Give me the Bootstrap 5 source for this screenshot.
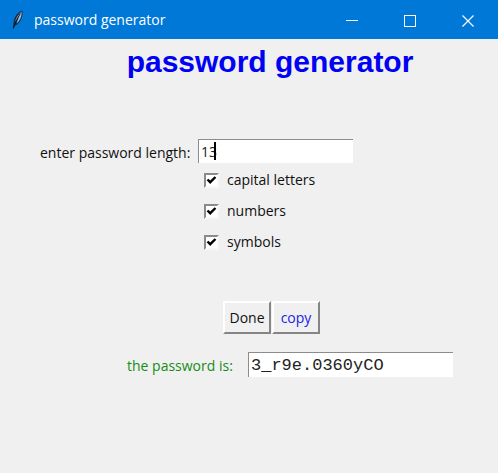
<!DOCTYPE html>
<html lang="en">
<head>
<meta charset="utf-8">
<meta name="viewport" content="width=device-width, initial-scale=1">
<title>password generator</title>
<link href="https://cdn.jsdelivr.net/npm/bootstrap@5.3.0/dist/css/bootstrap.min.css" rel="stylesheet">
<style>
  body { background: #f0f0f0; color: #111; font-family: "Open Sans", "Noto Sans", sans-serif; font-size: 14px; line-height: 20px; }
  .titlebar { background: #0078d7; height: 39px; padding: 0 1px 0 11px; }
  .titlebar-text { font-size: 14px; margin-left: 9px; }
  .win-btn { width: 58px; height: 39px; background: none; border: 0; color: #fff; padding: 0; }
  .app-title { font-family: "Liberation Sans", Arial, sans-serif; font-size: 30px; line-height: 36px; font-weight: 700; color: #0000f5; margin: 5px 0 59px; padding-left: 42px; }
  .length-row { padding-left: 40px; }
  .length-row label { width: 158px; padding-top: 4px; }
  .entry { border: 0; border-top: 1px solid #8c8c8c; border-left: 1px solid #8c8c8c; border-radius: 0; background: #fff; color: #222; outline: 0; display: block; }
  .length-entry { width: 155px; height: 24px; padding: 0 0 0 2px; }
  .caret { left: 16px; top: 3px; width: 2px; height: 18px; background: #000; }
  .options { padding: 7px 0 0 204px; gap: 11px; }
  .option { gap: 8px; height: 20px; }
  .tick { appearance: none; width: 15px; height: 15px; margin: 0; border: 2px solid; border-color: #8a8a8a #f8f8f8 #f8f8f8 #8a8a8a; background: #fff; }
  .tick:checked { background: #fff url("data:image/svg+xml,%3Csvg xmlns='http://www.w3.org/2000/svg' viewBox='0 0 11 11'%3E%3Cpath d='M1.5 4.5 4.2 7.2 9.5 2' fill='none' stroke='%23000' stroke-width='2.4'/%3E%3C/svg%3E") center / 11px 11px no-repeat; }
  .actions { padding: 49px 0 0 223px; gap: 1px; }
  .tk-btn { height: 33px; min-width: 48px; padding: 0 4px; border: 2px solid; border-color: #fff #858585 #858585 #fff; background: #f0f0f0; color: #111; }
  .tk-copy { color: #2222e6; }
  .result-row { padding: 18px 0 0 127px; }
  .result-row label { width: 121px; color: #178c17; padding-top: 4px; }
  .result-entry { width: 205px; height: 25px; padding: 0 0 0 2px; font-family: "Liberation Mono", "Courier New", monospace; font-size: 17px; }
</style>
</head>
<body>
<header class="titlebar d-flex align-items-center text-white">
  <svg width="14" height="22" viewBox="0 0 14 22" aria-hidden="true">
    <path d="M11.5 1.5C6.5 3 3 8 2.5 13.5L1.8 20 4.2 16.5C9 15 12 8.5 11.5 1.5Z" fill="#12324f"/>
    <path d="M10.5 2.8C7.5 5 5 9 4 13L8 7.5 5.5 14.5C9 12 11 7 10.5 2.8Z" fill="#9fbdd6"/>
    <path d="M2.2 19.5 5.3 11.5 9.3 4.5" stroke="#071421" stroke-width="1" fill="none"/>
  </svg>
  <span class="titlebar-text">password generator</span>
  <div class="d-flex ms-auto">
    <button class="win-btn" type="button" aria-label="Minimize"><svg width="12" height="12"><path d="M0 5.5H12" stroke="#fff"/></svg></button>
    <button class="win-btn" type="button" aria-label="Maximize"><svg width="12" height="12"><rect x=".5" y=".5" width="11" height="11" fill="none" stroke="#fff"/></svg></button>
    <button class="win-btn" type="button" aria-label="Close"><svg width="12" height="12"><path d="M.5.5 11.5 11.5M11.5.5.5 11.5" stroke="#fff" stroke-width="1.2"/></svg></button>
  </div>
</header>
<main>
  <h1 class="app-title text-center">password generator</h1>
  <div class="length-row d-flex">
    <label class="text-nowrap" for="length">enter password length:</label>
    <div class="position-relative">
      <input class="entry length-entry" id="length" type="text" value="13">
      <span class="caret position-absolute"></span>
    </div>
  </div>
  <div class="options d-flex flex-column">
    <div class="option d-flex align-items-center"><input class="tick" type="checkbox" id="capitals" checked><label for="capitals">capital letters</label></div>
    <div class="option d-flex align-items-center"><input class="tick" type="checkbox" id="numbers" checked><label for="numbers">numbers</label></div>
    <div class="option d-flex align-items-center"><input class="tick" type="checkbox" id="symbols" checked><label for="symbols">symbols</label></div>
  </div>
  <div class="actions d-flex">
    <button class="tk-btn" type="button">Done</button>
    <button class="tk-btn tk-copy" type="button">copy</button>
  </div>
  <div class="result-row d-flex">
    <label class="text-nowrap" for="result">the password is:</label>
    <input class="entry result-entry" id="result" type="text" value="3_r9e.0360yCO">
  </div>
</main>
<script src="https://cdn.jsdelivr.net/npm/bootstrap@5.3.0/dist/js/bootstrap.bundle.min.js"></script>
</body>
</html>
